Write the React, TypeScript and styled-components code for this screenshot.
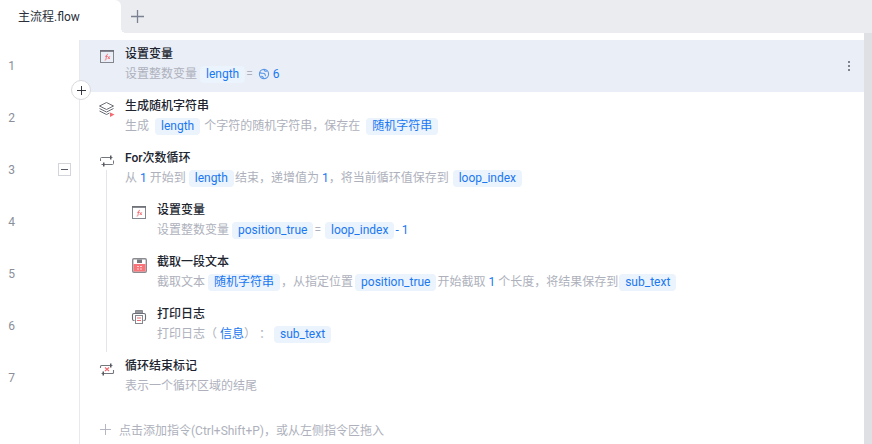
import styled, { createGlobalStyle } from "styled-components";
import type { ReactNode } from "react";

const GlobalStyle = createGlobalStyle`
  html, body { margin: 0; height: 100%; background: #fff; overflow: hidden; }
  body {
    font-family: Roboto, "Noto Sans CJK SC", sans-serif;
    font-size: 12px;
    text-spacing-trim: space-all;
  }
`;

const Page = styled.div`
  width: 872px;
  height: 444px;
  display: flex;
  flex-direction: column;
  overflow: hidden;
`;

const TabBar = styled.div`
  height: 33px;
  flex: none;
  display: flex;
  background: #ebecf0;
`;

const Tab = styled.div`
  width: 121px;
  height: 33px;
  background: #fff;
  border-radius: 0 6px 0 0;
  padding-left: 18px;
  box-sizing: border-box;
  line-height: 34px;
  color: #2b2f3a;
  position: relative;

  &::after {
    content: "";
    position: absolute;
    left: 100%;
    bottom: 0;
    width: 5px;
    height: 5px;
    background: radial-gradient(circle at 100% 0, transparent 5px, #fff 5px);
  }
`;

const NewTab = styled.div`
  width: 32px;
  display: flex;
  align-items: center;
  justify-content: center;
  color: #7b8190;
`;

const Main = styled.div`
  flex: 1;
  display: flex;
  min-height: 0;
`;

const Editor = styled.div`
  flex: 1;
  padding-top: 7px;
  display: flex;
  flex-direction: column;
`;

const Scrollbar = styled.div`
  width: 8px;
  flex: none;
  background: #dfe0e4;
`;

const Row = styled.div<{ $active?: boolean }>`
  height: 52px;
  flex: none;
  display: flex;
  position: relative;
  background: ${(p) => (p.$active ? "linear-gradient(90deg, #fff 79px, #e9eef7 79px)" : "none")};
`;

const Gutter = styled.div`
  width: 80px;
  flex: none;
  box-sizing: border-box;
  border-right: 1px solid #e8e9ed;
  padding: 0 8px;
  display: flex;
  align-items: center;
  justify-content: space-between;
  color: #8b8f9a;
`;

const LineNo = styled.span`
  width: 7px;
  text-align: center;
  line-height: 16px;
  margin-bottom: 1px;
`;

const Fold = styled.div`
  width: 11px;
  height: 11px;
  border: 1px solid #d3d5da;
  display: flex;
  align-items: center;
  justify-content: center;
  background: #fff;
  margin-bottom: 1px;

  &::before {
    content: "";
    width: 7px;
    height: 1px;
    background: #555a66;
  }
`;

const Body = styled.div`
  flex: 1;
  display: flex;
  padding-left: 19px;
`;

const Guide = styled.div`
  width: 24px;
  margin-left: 7px;
  flex: none;
  border-left: 1px solid #e4e5ea;
`;

const Glyph = styled.div<{ $tail?: boolean }>`
  width: 18px;
  height: 18px;
  margin: 8px 8px 0 0;
  flex: none;
  position: relative;

  &::after {
    content: "";
    display: ${(p) => (p.$tail ? "block" : "none")};
    position: absolute;
    left: 7px;
    top: 18px;
    width: 1px;
    height: 26px;
    background: #e4e5ea;
  }
`;

const Texts = styled.div`
  padding-top: 5px;
`;

const Title = styled.div`
  height: 18px;
  line-height: 18px;
  font-weight: 500;
  color: #20242e;
`;

const Desc = styled.div`
  margin-top: 2px;
  height: 18px;
  line-height: 18px;
  display: flex;
  align-items: center;
  white-space: pre;
  color: #aeb1bc;
`;

const Chip = styled.span<{ $l?: number; $r?: number }>`
  height: 17px;
  line-height: 17px;
  padding: 0 6px;
  border-radius: 4px;
  background: #ebf3fd;
  color: #1a78f0;
  margin: 0 ${(p) => p.$r ?? 1}px 0 ${(p) => p.$l ?? 3}px;
`;

const Blue = styled.span`
  color: #1a78f0;
`;

const AddPin = styled.div`
  position: absolute;
  left: 71px;
  bottom: -8px;
  width: 18px;
  height: 18px;
  border-radius: 50%;
  background: #fff;
  border: 1px solid #d9dade;
  display: flex;
  align-items: center;
  justify-content: center;
  color: #20242e;
  z-index: 1;
`;

const More = styled.div`
  position: absolute;
  right: 14px;
  top: 21px;
  display: flex;
  flex-direction: column;
  gap: 2px;

  span {
    width: 2px;
    height: 2px;
    background: #80838f;
  }
`;

const AddLine = styled.div`
  flex: 1;
  display: flex;
`;

const AddBody = styled.div`
  display: flex;
  align-items: center;
  gap: 8px;
  height: 18px;
  margin: 16px 0 0 20px;
  color: #aeb1bc;
`;

const Plus = ({ size = 12, width = 1.2 }: { size?: number; width?: number }) => (
  <svg width={size} height={size} viewBox="0 0 12 12" fill="none" stroke="currentColor" strokeWidth={width}>
    <path d="M6 0v12M0 6h12" />
  </svg>
);

const FxIcon = () => (
  <svg width="18" height="18" viewBox="0 0 18 18" fill="none">
    <rect x="1.500" y="2.500" width="13" height="12" stroke="#85878f" />
    <path d="M1 3h14" stroke="#6b6d75" strokeWidth="1.600" />
    <path d="M9 6.500c-1-.4-1.300.2-1.500 1.400L7 11c-.2 1-.6 1.400-1.300 1.200M6.200 8.300h2.400M8.800 8.300l2 2.700M10.800 8.300l-2 2.700" stroke="#f2696f" strokeWidth=".9" />
  </svg>
);

const LayersIcon = () => (
  <svg width="18" height="18" viewBox="0 0 18 18" fill="none" stroke="#6b6e76" strokeWidth="1">
    <path d="M7.500 2.500l7 3.500-7 3.500-7-3.500z" />
    <path d="M.5 8.500l7 3.500 7-3.500" />
    <path d="M.5 11l7 3.500 3-1.500" />
    <path d="M11 12.500l4.500 2-4.500 2.500z" fill="#f56a70" stroke="none" />
  </svg>
);

const LoopIcon = () => (
  <svg width="18" height="18" viewBox="0 0 18 18" fill="none" stroke="#74767e" strokeWidth="1">
    <path d="M1.500 9V6.500c0-.6.4-1 1-1h11M14.500 8.500v3c0 .6-.4 1-1 1h-11" />
    <path d="M11 3.500h1.500v4H11zM4 10.500h1.500v4H4z" fill="#55585f" stroke="none" />
  </svg>
);

const LoopEndIcon = () => (
  <svg width="18" height="18" viewBox="0 0 18 18" fill="none" stroke="#74767e" strokeWidth="1.100">
    <path d="M1.500 8V6.500c0-.6.4-1 1-1h11M14.500 10v2.500c0 .6-.4 1-1 1h-11" />
    <path d="M11 3.500h1.500v4H11zM3.500 11.500H5v4H3.500z" fill="#55585f" stroke="none" />
    <path d="M6 7.500l4 3.500M10 7.500l-4 3.500" stroke="#f2696f" />
  </svg>
);

const SaveIcon = () => (
  <svg width="18" height="18" viewBox="0 0 18 18" fill="none">
    <rect x="1.700" y="2.700" width="13.600" height="13.600" rx="1.200" fill="#fff" stroke="#8a8b91" strokeWidth="1.400" />
    <rect x="6" y="3.500" width="5" height="3.500" fill="#77797f" />
    <rect x="2.500" y="8" width="12" height="7.500" fill="#f97478" />
    <path d="M6 10.500h5M6 13h5" stroke="#ffd7d8" strokeDasharray="2 1" />
  </svg>
);

const PrintIcon = () => (
  <svg width="18" height="18" viewBox="0 0 18 18" fill="none">
    <path d="M4.500 5.500V2.500h7v3z" fill="#96989f" stroke="#8a8b91" />
    <path d="M3.500 12.500H3c-.9 0-1.500-.6-1.500-1.500V7c0-.9.6-1.500 1.500-1.500h10c.9 0 1.500.6 1.500 1.500v4c0 .9-.6 1.500-1.500 1.500h-.5" stroke="#6b6e76" strokeWidth="1.100" />
    <rect x="4.500" y="7.500" width="7" height="8" fill="#fff" stroke="#85878f" />
    <path d="M6 10h4M6 12.500h4" stroke="#f2696f" />
  </svg>
);

const GlobeIcon = () => (
  <svg width="12" height="12" viewBox="0 0 12 12" fill="none" stroke="#5a97e6" strokeWidth="1.100" style={{ margin: "0 3px 0 5px" }}>
    <circle cx="6" cy="6" r="4.600" />
    <path d="M1.800 4.500c2 1.500 3 .2 4.500 1s.5 2 1.500 2.500M6.500 1.500c-1 1.500 1 2 2.500 1.500M2.500 8.500c1.500-.5 2.500 0 3 2" />
  </svg>
);

type StepProps = {
  no: number;
  icon: ReactNode;
  title: string;
  depth?: boolean;
  tail?: boolean;
  active?: boolean;
  fold?: boolean;
  children: ReactNode;
  extra?: ReactNode;
};

function Step({ no, icon, title, depth, tail, active, fold, children, extra }: StepProps) {
  return (
    <Row $active={active}>
      <Gutter>
        <LineNo>{no}</LineNo>
        {fold && <Fold />}
      </Gutter>
      <Body>
        {depth && <Guide />}
        <Glyph $tail={tail}>{icon}</Glyph>
        <Texts>
          <Title>{title}</Title>
          <Desc>{children}</Desc>
        </Texts>
      </Body>
      {extra}
    </Row>
  );
}

function App() {
  return (
    <Page>
      <GlobalStyle />
      <TabBar>
        <Tab>主流程.flow</Tab>
        <NewTab>
          <Plus size={13} />
        </NewTab>
      </TabBar>
      <Main>
        <Editor>
          <Step
            no={1}
            icon={<FxIcon />}
            title="设置变量"
            active
            extra={
              <>
                <AddPin>
                  <Plus size={9} />
                </AddPin>
                <More>
                  <span />
                  <span />
                  <span />
                </More>
              </>
            }
          >
            设置整数变量<Chip>length</Chip>=<GlobeIcon />
            <Blue>6</Blue>
          </Step>
          <Step no={2} icon={<LayersIcon />} title="生成随机字符串">
            生成<Chip $l={6} $r={4}>length</Chip>个字符的随机字符串，保存在<Chip $l={6}>随机字符串</Chip>
          </Step>
          <Step no={3} icon={<LoopIcon />} title="For次数循环" fold tail>
            从 <Blue>1</Blue> 开始到<Chip $l={3}>length</Chip>结束，递增值为 <Blue>1</Blue>，将当前循环值保存到<Chip $l={4}>loop_index</Chip>
          </Step>
          <Step no={4} icon={<FxIcon />} title="设置变量" depth>
            设置整数变量<Chip>position_true</Chip>=<Chip $l={4}>loop_index</Chip>
            <Blue>- 1</Blue>
          </Step>
          <Step no={5} icon={<SaveIcon />} title="截取一段文本" depth>
            截取文本<Chip>随机字符串</Chip>，从指定位置<Chip $l={2}>position_true</Chip>开始截取 <Blue>1</Blue> 个长度，将结果保存到<Chip $l={1}>sub_text</Chip>
          </Step>
          <Step no={6} icon={<PrintIcon />} title="打印日志" depth>
            打印日志（ <Blue>信息</Blue>） ： <Chip $l={0}>sub_text</Chip>
          </Step>
          <Step no={7} icon={<LoopEndIcon />} title="循环结束标记">
            表示一个循环区域的结尾
          </Step>
          <AddLine>
            <Gutter />
            <AddBody>
              <Plus size={11} width={1} />
              点击添加指令(Ctrl+Shift+P)，或从左侧指令区拖入
            </AddBody>
          </AddLine>
        </Editor>
        <Scrollbar />
      </Main>
    </Page>
  );
}

export default App;
